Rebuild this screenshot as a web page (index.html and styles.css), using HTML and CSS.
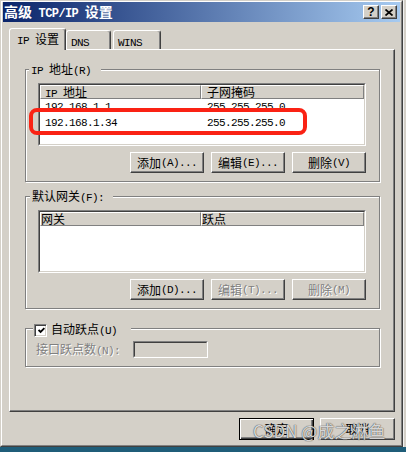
FILE: index.html
```html
<!DOCTYPE html>
<html>
<head>
<meta charset="utf-8">
<link rel="stylesheet" href="styles.css">
</head>
<body>
<div class="screen">
  <div class="toprow">
    <div class="window">
      <div class="frame">
        <div class="titlebar">
          <div class="title">高级<span class="tm"> TCP/IP </span>设置</div>
          <div class="caps">
            <div class="cap"><span class="q">?</span></div>
            <div class="cap"><svg width="8" height="7" viewBox="0 0 8 7"><path d="M0.5 0.5 L7.5 6.5 M7.5 0.5 L0.5 6.5" stroke="#000" stroke-width="1.7" fill="none"/></svg></div>
          </div>
        </div>
        <div class="client">
          <div class="tabs">
            <div class="tab sel"><span class="m">IP </span>设置</div>
            <div class="tab t-dns"><span class="m">DNS</span></div>
            <div class="tab t-wins"><span class="m">WINS</span></div>
          </div>
          <div class="panel">
            <div class="group g1">
              <div class="legend lg1"><span class="m">IP </span>地址<span class="m">(R)</span></div>
              <div class="list">
                <div class="list-in">
                  <div class="hdr">
                    <div class="hc c1"><span class="m">IP </span>地址</div>
                    <div class="hc c2">子网掩码</div>
                  </div>
                  <div class="row"><div class="cell c1 m">192.168.1.1</div><div class="cell c2 m">255.255.255.0</div></div>
                  <div class="row"><div class="cell c1 m">192.168.1.34</div><div class="cell c2 m">255.255.255.0</div></div>
                </div>
                <div class="mark"></div>
              </div>
              <div class="btnrow">
                <div class="btn">添加<span class="m">(A)...</span></div>
                <div class="btn">编辑<span class="m">(E)...</span></div>
                <div class="btn">删除<span class="m">(V)</span></div>
              </div>
            </div>
            <div class="group g2">
              <div class="legend lg2">默认网关<span class="m">(F):</span></div>
              <div class="list">
                <div class="list-in">
                  <div class="hdr flat">
                    <div class="hc c1">网关</div>
                    <div class="hc c2">跃点</div>
                  </div>
                </div>
              </div>
              <div class="btnrow">
                <div class="btn">添加<span class="m">(D)...</span></div>
                <div class="btn dis">编辑<span class="m">(T)...</span></div>
                <div class="btn dis">删除<span class="m">(M)</span></div>
              </div>
            </div>
            <div class="group g3">
              <div class="legend lg3">
                <div class="chk"><svg width="7" height="7" viewBox="0 0 7 7"><path d="M0.6 3 L2.6 5 L6.4 1.2" stroke="#000" stroke-width="1.8" fill="none"/></svg></div>
                <span class="chklabel">自动跃点<span class="m">(U)</span></span>
              </div>
              <div class="mrow">
                <div class="mlabel dis">接口跃点数<span class="m">(N):</span></div>
                <div class="tbox"><div class="tbox-in"></div></div>
              </div>
            </div>
          </div>
          <div class="footer">
            <div class="fbtn def">确定</div>
            <div class="fbtn">取消</div>
          </div>
        </div>
      </div>
    </div>
    <div class="edge"></div>
  </div>
  <div class="desk"></div>
  <div class="watermark">CSDN @成之淋鱼</div>
</div>
</body>
</html>
```
FILE: styles.css
```css
* { box-sizing: border-box; margin: 0; padding: 0; }
body {
  margin: 0;
  background: #1f5d79;
  font-family: "Noto Sans CJK SC", sans-serif;
  font-size: 12px;
  line-height: 14px;
  color: #000;
}
.screen {
  position: relative;
  width: 406px;
  height: 452px;
  overflow: hidden;
  display: flex;
  flex-direction: column;
}
.toprow { display: flex; height: 447px; }
.desk { flex: 1; background: #1f5d79; }
.edge { flex: 1; background: #d4d0c8; border-left: 1px solid #f0f0f0; }

.window {
  width: 403px;
  height: 447px;
  background: #d4d0c8;
  border: 1px solid;
  border-color: #d4d0c8 #404040 #404040 #d4d0c8;
}
.frame {
  height: 100%;
  border: 1px solid;
  border-color: #fff #808080 #808080 #fff;
  padding: 0 1px 1px 1px;
  display: flex;
  flex-direction: column;
}
.m {
  font-family: "Liberation Mono", monospace;
  font-size: 11px;
  letter-spacing: -0.6px;
  white-space: pre;
}

.titlebar {
  height: 20px;
  display: flex;
  align-items: center;
  justify-content: space-between;
  background: linear-gradient(to right, #0a246a, #a6caf0);
  padding: 0 3px 0 1px;
}
.title {
  color: #fff;
  font-weight: bold;
  font-size: 14px;
  line-height: 16px;
  white-space: pre;
}
.tm {
  font-family: "Liberation Mono", monospace;
  font-size: 12px;
  letter-spacing: -0.6px;
  white-space: pre;
}
.caps { display: flex; gap: 2px; }
.cap {
  width: 16px;
  height: 14px;
  background: #d4d0c8;
  border: 1px solid;
  border-color: #fff #404040 #404040 #fff;
  box-shadow: inset -1px -1px 0 #808080;
  display: flex;
  align-items: center;
  justify-content: center;
}
.q {
  font-family: "Liberation Sans", sans-serif;
  font-weight: bold;
  font-size: 12px;
  line-height: 12px;
}

.client {
  flex: 1;
  display: flex;
  flex-direction: column;
  padding: 0 5px 0 6px;
}
.tabs {
  display: flex;
  align-items: flex-end;
  height: 21px;
  margin-top: 6px;
  position: relative;
  z-index: 1;
}
.tab {
  height: 19px;
  background: #d4d0c8;
  border: 1px solid;
  border-bottom: none;
  border-color: #fff #404040 transparent #fff;
  border-radius: 3px 3px 0 0;
  box-shadow: inset -1px 0 0 #808080;
  padding: 3px 0 0 4px;
  white-space: nowrap;
}
.tab.sel {
  height: 22px;
  width: 57px;
  margin-bottom: -1px;
  padding-left: 7px;
}
.t-dns { width: 45px; }
.t-wins { width: 48px; margin-left: 2px; }

.panel {
  height: 363px;
  border: 1px solid;
  border-color: #fff #404040 #404040 #fff;
  box-shadow: inset -1px -1px 0 #808080;
  padding: 19px 14px 0 15px;
  display: flex;
  flex-direction: column;
}
.group {
  position: relative;
  border: 1px solid #808080;
  box-shadow: inset 1px 1px 0 #fff, 1px 1px 0 #fff;
  padding: 13px 13px 8px 12px;
}
.g2 { margin-top: 14px; }
.g3 { margin-top: 19px; padding: 12px 0 8px 10px; height: 39px; }

.legend {
  position: absolute;
  top: -8px;
  background: #d4d0c8;
  line-height: 14px;
  white-space: nowrap;
}
.lg1 { left: 3px; padding: 0 10px 0 2px; }
.lg2 { left: 4px; padding: 0 9px 0 2px; }
.lg3 {
  left: 7px;
  top: -7px;
  padding: 0 14px 0 1px;
  display: flex;
  align-items: center;
  gap: 4px;
}
.chk {
  width: 13px;
  height: 13px;
  background: #fff;
  border: 1px solid;
  border-color: #808080 #fff #fff #808080;
  box-shadow: inset 1px 1px 0 #404040, inset -1px -1px 0 #d4d0c8;
  display: flex;
  align-items: center;
  justify-content: center;
  padding: 1px 0 0 1px;
}

.list {
  position: relative;
  height: 63px;
  border: 1px solid;
  border-color: #808080 #fff #fff #808080;
}
.list-in {
  height: 100%;
  background: #fff;
  border: 1px solid;
  border-color: #404040 #d4d0c8 #d4d0c8 #404040;
}
.hdr { display: flex; height: 14px; }
.hc {
  background: #d4d0c8;
  border: 1px solid;
  border-color: #fff #808080 #808080 #fff;
  line-height: 12px;
  white-space: nowrap;
}
.hdr .c1 { width: 161px; padding-left: 4px; }
.hdr .c2 { flex: 1; padding-left: 5px; }
.hdr.flat .c1, .hdr.flat .c2 { padding-left: 0; }

.row { display: flex; height: 16px; line-height: 16px; }
.cell.c1 { width: 161px; padding-left: 5px; }
.cell.c2 { flex: 1; padding-left: 6px; }

.mark {
  position: absolute;
  left: -10px;
  top: 24px;
  width: 278px;
  height: 27px;
  border: 4px solid #fa2214;
  border-radius: 8px;
  z-index: 2;
}

.btnrow {
  display: flex;
  justify-content: flex-end;
  gap: 7px;
  margin-top: 6px;
}
.btn, .fbtn {
  width: 74px;
  height: 21px;
  background: #d4d0c8;
  border: 1px solid;
  border-color: #fff #404040 #404040 #fff;
  box-shadow: inset -1px -1px 0 #808080;
  display: flex;
  align-items: center;
  justify-content: center;
  white-space: nowrap;
}
.dis { color: #808080; text-shadow: 1px 1px 0 #fff; }

.mrow { display: flex; align-items: center; }
.mlabel { width: 97px; white-space: nowrap; }
.tbox {
  width: 75px;
  height: 17px;
  border: 1px solid;
  border-color: #808080 #fff #fff #808080;
}
.tbox-in {
  height: 100%;
  border: 1px solid;
  border-color: #404040 #d4d0c8 #d4d0c8 #404040;
  background: #d4d0c8;
}

.footer {
  display: flex;
  justify-content: flex-end;
  gap: 6px;
  margin-top: 6px;
}
.fbtn { width: 75px; height: 22px; }
.fbtn.def {
  border: 1px solid #000;
  box-shadow: inset 1px 1px 0 #fff, inset -1px -1px 0 #404040, inset -2px -2px 0 #808080;
}

.watermark {
  position: absolute;
  left: 253px;
  top: 421px;
  font-size: 17px;
  line-height: 20px;
  color: rgba(255, 255, 255, 0.8);
  text-shadow: 0 0 1px rgba(60, 60, 60, 1), 0 0 1px rgba(60, 60, 60, 0.8);
  white-space: nowrap;
  z-index: 5;
}
```
